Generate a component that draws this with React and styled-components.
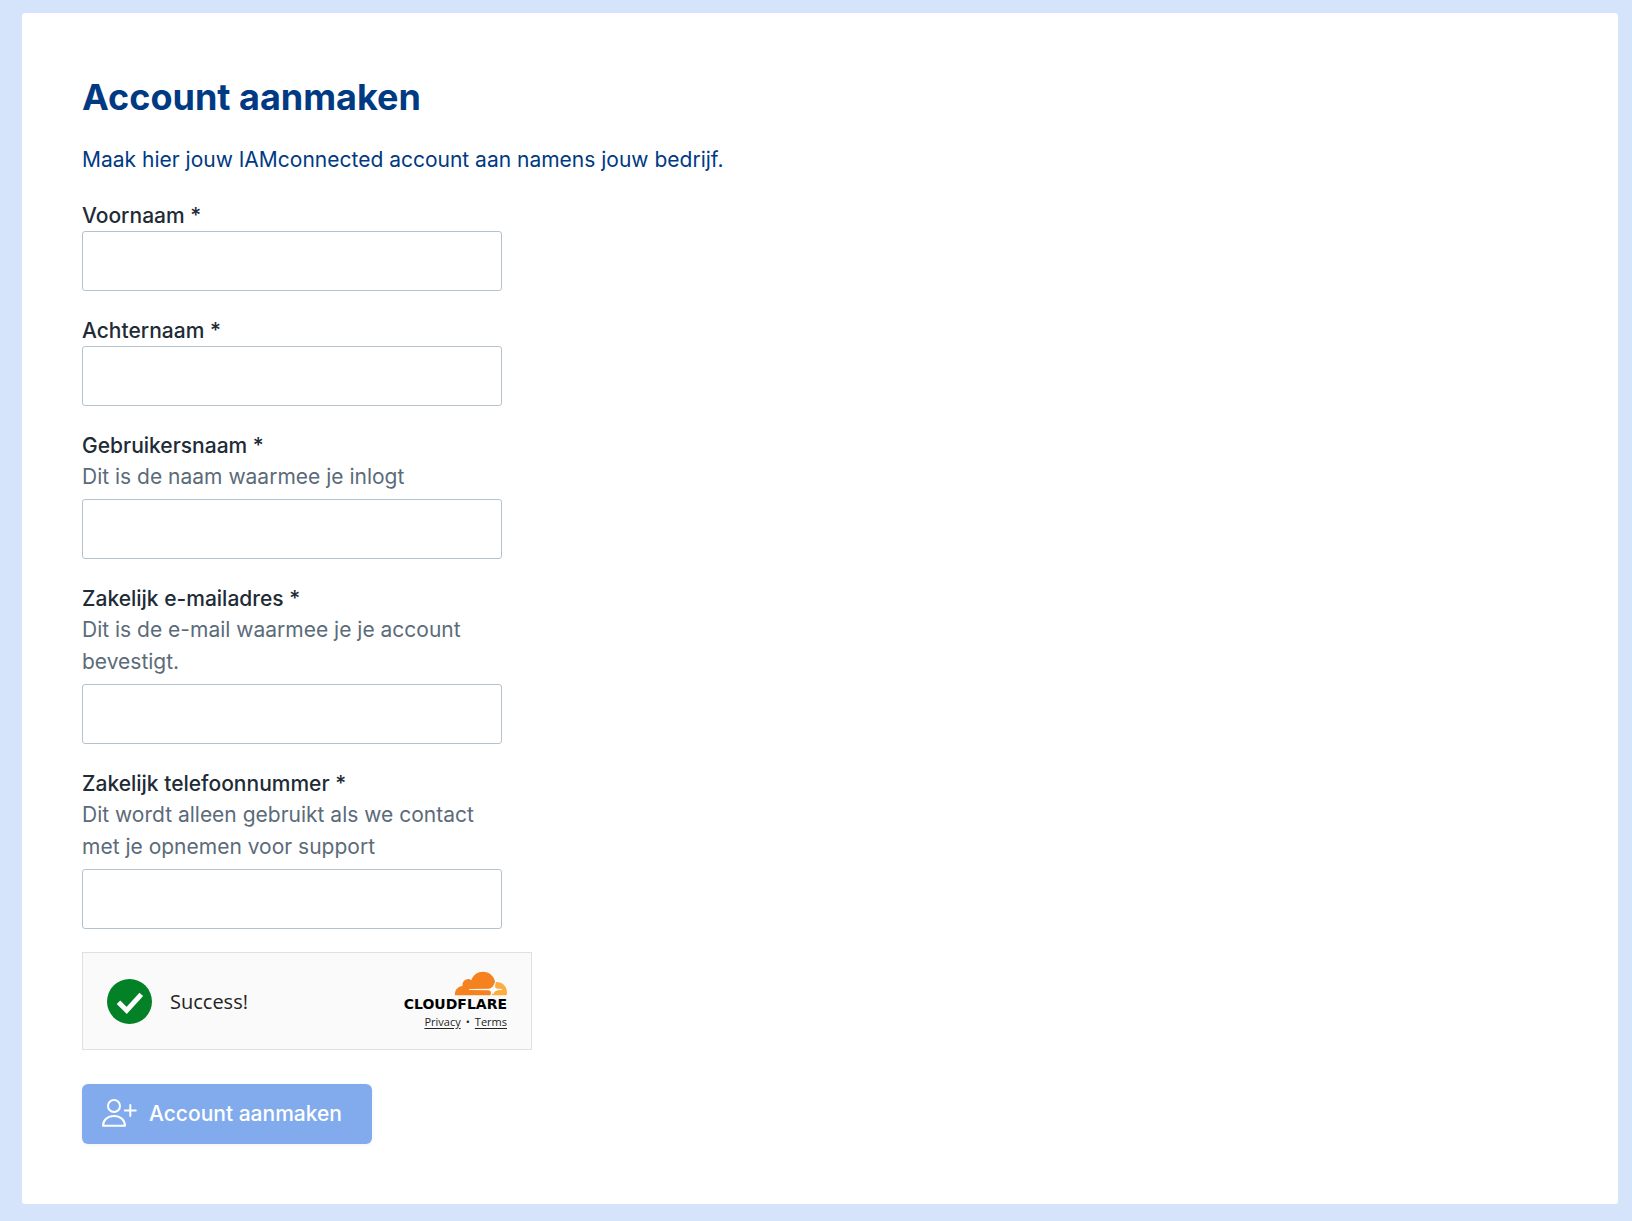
import React, { useState } from 'react';
import styled, { createGlobalStyle } from 'styled-components';

const fields = [
  { name: 'firstName', label: 'Voornaam *', type: 'text' },
  { name: 'lastName', label: 'Achternaam *', type: 'text' },
  {
    name: 'username',
    label: 'Gebruikersnaam *',
    hint: 'Dit is de naam waarmee je inlogt',
    type: 'text',
  },
  {
    name: 'email',
    label: 'Zakelijk e-mailadres *',
    hint: 'Dit is de e-mail waarmee je je account bevestigt.',
    type: 'email',
  },
  {
    name: 'phone',
    label: 'Zakelijk telefoonnummer *',
    hint: 'Dit wordt alleen gebruikt als we contact met je opnemen voor support',
    type: 'tel',
  },
];

const CheckIcon = () => (
  <svg width="45" height="45" viewBox="0 0 45 45" aria-hidden="true">
    <circle cx="22.5" cy="22.5" r="22.5" fill="#038127" />
    <path d="M11.5 23.2l8.2 8.2 14.6-16" fill="none" stroke="#fff" strokeWidth="5" />
  </svg>
);

const CloudIcon = () => (
  <svg width="52" height="25" viewBox="0 6.3 24 11.3" aria-hidden="true">
    <path
      fill="#f6821f"
      d="M16.5088 16.8447c.1475-.5068.0908-.9707-.1553-1.3154-.2246-.3164-.6045-.499-1.0615-.5205l-8.6592-.1123a.1559.1559 0 0 1-.1333-.0713c-.0283-.042-.0351-.0986-.021-.1553.0278-.084.1123-.1484.2036-.1562l8.7359-.1123c1.0351-.0489 2.1601-.8868 2.5537-1.9136l.499-1.3013c.0215-.0561.0293-.1128.0147-.168-.5625-2.5463-2.835-4.4453-5.5499-4.4453-2.5039 0-4.6284 1.6177-5.3876 3.8614-.4927-.3658-1.1187-.5625-1.794-.499-1.2026.119-2.1665 1.083-2.2861 2.2856-.0283.31-.0069.6128.0635.894C1.5683 13.171 0 14.7754 0 16.752c0 .1748.0142.3515.0352.5273.0141.083.0844.1475.1689.1475h15.9814c.0909 0 .1758-.0645.2032-.1553l.12-.4268z"
    />
    <path
      fill="#fbad41"
      d="M19.2656 11.2813c-.0771 0-.1611 0-.2383.0112-.0566 0-.1054.0415-.127.0976l-.3378 1.1744c-.1475.5068-.0918.9707.1543 1.3164.2256.3164.6055.498 1.0625.5195l1.8437.1133c.0557 0 .1055.0263.1329.0703.0283.043.0351.1074.0214.1562-.0283.084-.1132.1485-.204.1553l-1.921.1123c-1.041.0488-2.1582.8867-2.5527 1.914l-.1406.3585c-.0283.0713.0215.1416.0986.1416h6.5977c.0771 0 .1474-.0489.169-.126.1122-.4082.1757-.837.1757-1.2803 0-2.6025-2.125-4.727-4.7344-4.727z"
    />
    <path
      fill="#fff"
      d="M17.9 12.5q.3 2 2.4 2.3-2.1.3-2.7 2.3-.3-2-2.3-2.3 2.1-.3 2.6-2.3z"
    />
  </svg>
);

const UserPlusIcon = () => (
  <svg
    width="35"
    height="28"
    viewBox="0 0 35 28"
    fill="none"
    stroke="currentColor"
    strokeWidth="2"
    strokeLinecap="round"
    strokeLinejoin="round"
    aria-hidden="true"
  >
    <circle cx="12" cy="7" r="6" />
    <path d="M1 26.7c0-5.6 4.6-9.7 11-9.7s11 4.1 11 9.7z" />
    <path d="M28.3 6v11M22.8 11.5h11" />
  </svg>
);

const App = () => {
  const [values, setValues] = useState({});

  const handleChange = (e) => {
    setValues({ ...values, [e.target.name]: e.target.value });
  };

  return (
    <>
      <GlobalStyle />
      <Page>
        <Card>
          <Title>Account aanmaken</Title>
          <Intro>Maak hier jouw IAMconnected account aan namens jouw bedrijf.</Intro>
          <form onSubmit={(e) => e.preventDefault()}>
            <Fields>
              {fields.map(({ name, label, hint, type }) => (
                <Field key={name}>
                  <Label htmlFor={name}>{label}</Label>
                  {hint && <Hint id={`${name}-hint`}>{hint}</Hint>}
                  <Input
                    id={name}
                    name={name}
                    type={type}
                    value={values[name] || ''}
                    onChange={handleChange}
                    aria-describedby={hint ? `${name}-hint` : undefined}
                  />
                </Field>
              ))}
            </Fields>
            <Challenge>
              <Status>
                <CheckIcon />
                <span>Success!</span>
              </Status>
              <Brand>
                <CloudIcon />
                <BrandName>CLOUDFLARE</BrandName>
                <BrandLinks>
                  <a href="#privacy">Privacy</a>
                  <span>•</span>
                  <a href="#terms">Terms</a>
                </BrandLinks>
              </Brand>
            </Challenge>
            <SubmitButton type="submit">
              <UserPlusIcon />
              Account aanmaken
            </SubmitButton>
          </form>
        </Card>
      </Page>
    </>
  );
};

const GlobalStyle = createGlobalStyle`
  * {
    box-sizing: border-box;
  }
  body {
    margin: 0;
    background-color: #d6e4fb;
    font-family: Inter, "Liberation Sans", sans-serif;
    font-size: 21px;
    color: #212b36;
  }
`;

const Page = styled.main`
  padding: 13px 14px 17px 22px;
`;

const Card = styled.section`
  background-color: #fff;
  border-radius: 3px;
  padding: 60px;
`;

const Title = styled.h1`
  margin: 0 0 23px;
  font-size: 36px;
  line-height: 48px;
  font-weight: 700;
  color: #003a83;
`;

const Intro = styled.p`
  margin: 0 0 24px;
  line-height: 32px;
  color: #003a83;
`;

const Fields = styled.div`
  display: flex;
  flex-direction: column;
  gap: 24px;
  max-width: 420px;
`;

const Field = styled.div`
  display: flex;
  flex-direction: column;
`;

const Label = styled.label`
  line-height: 31px;
  font-weight: 500;
`;

const Hint = styled.p`
  margin: 0 0 6px;
  line-height: 32px;
  color: #5b6b79;
`;

const Input = styled.input`
  width: 100%;
  height: 60px;
  padding: 0 16px;
  border: 1px solid #b4c2ce;
  border-radius: 3px;
  background-color: #fff;
  font: inherit;
  color: inherit;
  &:focus {
    outline: 2px solid #82abee;
  }
`;

const Challenge = styled.div`
  display: flex;
  align-items: center;
  justify-content: space-between;
  max-width: 450px;
  height: 98px;
  margin: 23px 0 34px;
  padding: 0 24px;
  border: 1px solid #e0e0e0;
  background-color: #fafafa;
  font-family: "Open Sans", "Noto Sans", sans-serif;
  color: #232323;
`;

const Status = styled.div`
  display: flex;
  align-items: center;
  gap: 18px;
  font-size: 20px;
`;

const Brand = styled.div`
  display: flex;
  flex-direction: column;
  align-items: flex-end;
`;

const BrandName = styled.span`
  font-family: "DejaVu Sans", sans-serif;
  font-size: 14px;
  line-height: 16px;
  font-weight: 700;
  color: #000;
`;

const BrandLinks = styled.div`
  display: flex;
  gap: 5px;
  font-size: 11px;
  line-height: 20px;
  a {
    color: inherit;
    text-underline-offset: 2px;
  }
`;

const SubmitButton = styled.button`
  display: flex;
  align-items: center;
  gap: 12px;
  height: 60px;
  padding: 0 30px 2px 20px;
  border: none;
  border-radius: 6px;
  background-color: #82abee;
  box-shadow: 0 1px 4px rgba(0, 0, 0, 0.06);
  font: inherit;
  font-weight: 500;
  color: #fff;
  cursor: pointer;
`;

export default App;
